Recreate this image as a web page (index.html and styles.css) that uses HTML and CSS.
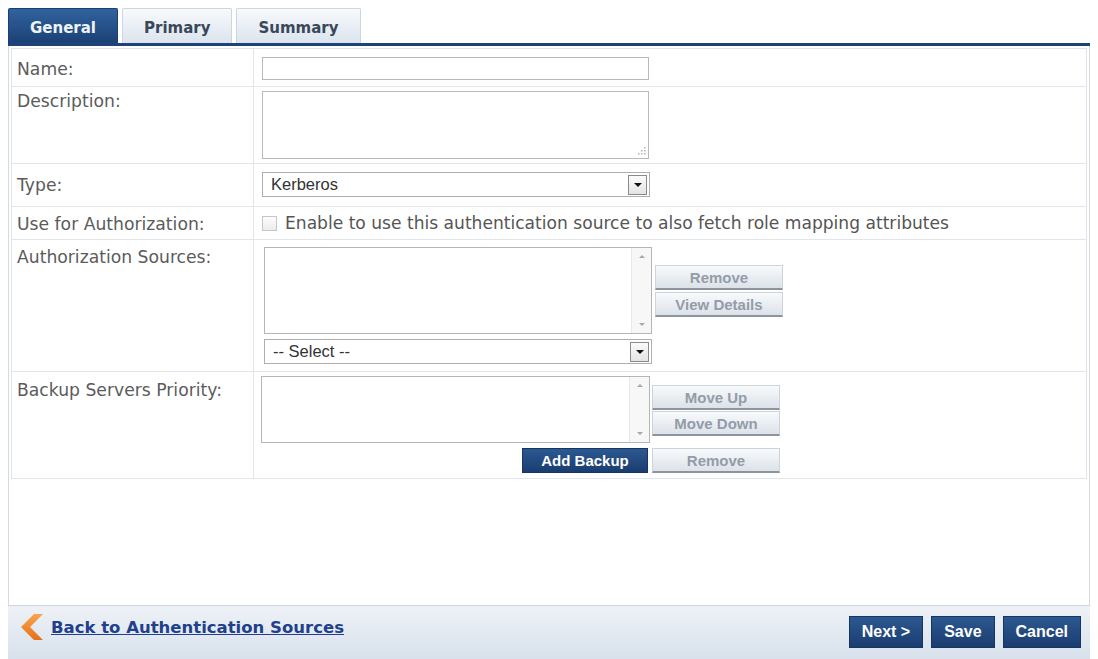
FILE: index.html
```html
<!DOCTYPE html>
<html>
<head>
<meta charset="utf-8">
<title>Authentication Source</title>
<link rel="stylesheet" href="styles.css">
</head>
<body>
<div class="tabs">
  <div class="tab active">General</div>
  <div class="tab">Primary</div>
  <div class="tab">Summary</div>
</div>
<div class="panel">
  <div class="form">
    <div class="label l-name">Name:</div>
    <div class="value v-name"><input class="text" type="text"></div>

    <div class="label l-desc">Description:</div>
    <div class="value v-desc">
      <div class="textarea">
        <svg class="grip" width="10" height="10" viewBox="0 0 10 10"><g fill="#b5b5b5"><rect x="8" y="1" width="1.5" height="1.5"/><rect x="5" y="4" width="1.5" height="1.5"/><rect x="8" y="4" width="1.5" height="1.5"/><rect x="2" y="7" width="1.5" height="1.5"/><rect x="5" y="7" width="1.5" height="1.5"/><rect x="8" y="7" width="1.5" height="1.5"/></g></svg>
      </div>
    </div>

    <div class="label l-type">Type:</div>
    <div class="value v-type">
      <div class="select"><span>Kerberos</span><span class="arrow"></span></div>
    </div>

    <div class="label l-use">Use for Authorization:</div>
    <div class="value v-use">
      <span class="cb"></span><span class="cbtext">Enable to use this authentication source to also fetch role mapping attributes</span>
    </div>

    <div class="label l-auth">Authorization Sources:</div>
    <div class="value v-auth">
      <div class="auth-grid">
        <div class="listbox lb-auth"><div class="sb"><span class="up"></span><span class="dn"></span></div></div>
        <div class="btncol auth-btns">
          <div class="gbtn">Remove</div>
          <div class="gbtn">View Details</div>
        </div>
        <div class="select"><span>-- Select --</span><span class="arrow"></span></div>
      </div>
    </div>

    <div class="label l-backup">Backup Servers Priority:</div>
    <div class="value v-backup">
      <div class="backup-grid">
        <div class="listbox lb-backup"><div class="sb"><span class="up"></span><span class="dn"></span></div></div>
        <div class="btncol move-btns">
          <div class="gbtn">Move Up</div>
          <div class="gbtn">Move Down</div>
        </div>
        <div class="bbtn add">Add Backup</div>
        <div class="gbtn">Remove</div>
      </div>
    </div>
  </div>
</div>
<div class="footer">
  <a class="back" href="#">
    <svg class="chev" width="27" height="28" viewBox="0 0 27 28">
      <defs><linearGradient id="og" x1="0" y1="0" x2="0" y2="1"><stop offset="0" stop-color="#f9a54a"/><stop offset="1" stop-color="#e5701a"/></linearGradient></defs>
      <polygon points="15,1 24,1 11,14 24,27 15,27 2,14" fill="url(#og)"/>
    </svg>
    <span class="backtext">Back to Authentication Sources</span>
  </a>
  <div class="actions">
    <div class="bbtn fbtn">Next &gt;</div>
    <div class="bbtn fbtn">Save</div>
    <div class="bbtn fbtn">Cancel</div>
  </div>
</div>
</body>
</html>
```
FILE: styles.css
```css
html, body {
  height: 100%;
  overflow: hidden;
}
body {
  margin: 8px 8px 0;
  height: 651px;
  display: flex;
  flex-direction: column;
  background: #fff;
  font-family: "DejaVu Sans", Verdana, sans-serif;
}

/* Tabs */
.tabs {
  display: flex;
  gap: 4px;
  height: 35px;
  border-bottom: 3px solid #1f4278;
  flex: none;
}
.tab {
  box-sizing: border-box;
  height: 35px;
  padding: 4px 21px 0;
  display: flex;
  align-items: center;
  font-weight: bold;
  font-size: 15px;
  color: #3a475a;
  background: linear-gradient(#f8fafc, #dbe4ee);
  border: 1px solid #cdd5de;
  border-bottom: none;
  border-radius: 2px 2px 0 0;
}
.tab.active {
  background: linear-gradient(#32629e, #1b4176);
  border-color: #1d3f70;
  color: #eef3f8;
}

/* Panel */
.panel {
  flex: 1;
  border-left: 1px solid #d3dae2;
  border-right: 1px solid #d3dae2;
  padding: 2px 2px 0;
}
.form {
  display: grid;
  grid-template-columns: 242px 1fr;
  border: 1px solid #dfe5ec;
  border-bottom: none;
}
.label {
  box-sizing: border-box;
  border-right: 1px solid #dfe5ec;
  border-bottom: 1px solid #e1e6ec;
  padding: 8px 5px 0;
  font-size: 17.2px;
  line-height: 20px;
  color: #5b5b5b;
}
.l-name { padding-top: 10px; }
.l-desc { padding-top: 4px; }
.l-type { padding-top: 11px; }
.l-use { padding-top: 7px; }
.l-auth { padding-top: 7px; }
.l-backup { padding-top: 8px; }

.value {
  border-bottom: 1px solid #e1e6ec;
  padding: 0 8px;
}
.v-name { padding-top: 8px; padding-bottom: 6px; }
.v-desc { padding-top: 4px; padding-bottom: 4px; }
.v-type { padding-top: 8px; padding-bottom: 9px; }
.v-use {
  padding-top: 8px;
  padding-bottom: 8px;
  display: flex;
  align-items: center;
}
.v-auth { padding-top: 7px; padding-bottom: 7px; padding-left: 10px; }
.v-backup { padding-top: 4px; padding-bottom: 5px; padding-left: 7px; }

/* Controls */
.text {
  display: block;
  box-sizing: border-box;
  width: 387px;
  height: 23px;
  margin: 0;
  border: 1px solid #b9b9b9;
  background: #fff;
  padding: 0 4px;
}
.textarea {
  box-sizing: border-box;
  width: 387px;
  height: 68px;
  border: 1px solid #b9b9b9;
  position: relative;
  background: #fff;
}
.grip {
  position: absolute;
  right: 2px;
  bottom: 2px;
}
.select {
  box-sizing: border-box;
  width: 388px;
  height: 25px;
  border: 1px solid #aeaeae;
  display: flex;
  align-items: center;
  justify-content: space-between;
  padding-left: 8px;
  font-family: "Liberation Sans", Arial, sans-serif;
  font-size: 16.5px;
  color: #333;
  background: #fff;
}
.arrow {
  box-sizing: border-box;
  width: 19px;
  height: 20px;
  margin-right: 2px;
  border: 1px solid #8a8a8a;
  background: linear-gradient(#fbfbfb, #e4e4e4);
  display: flex;
  align-items: center;
  justify-content: center;
}
.arrow::after {
  content: "";
  width: 0;
  height: 0;
  border-left: 4px solid transparent;
  border-right: 4px solid transparent;
  border-top: 4px solid #111;
}
.cb {
  box-sizing: border-box;
  width: 15px;
  height: 15px;
  border: 1px solid #c6c6c6;
  background: linear-gradient(#fdfdfd, #ececec);
  margin-right: 8px;
  flex: none;
}
.cbtext {
  font-size: 17.1px;
  line-height: 16px;
  color: #555;
  white-space: nowrap;
}

.listbox {
  box-sizing: border-box;
  border: 1px solid #b5b5b5;
  background: #fff;
  display: flex;
  justify-content: flex-end;
}
.lb-auth { height: 87px; }
.lb-backup { height: 67px; }
.sb {
  width: 19px;
  background: #f7f7f7;
  border-left: 1px solid #e8e8e8;
  display: flex;
  flex-direction: column;
  justify-content: space-between;
  align-items: center;
  padding: 7px 0;
}
.up, .dn {
  width: 0;
  height: 0;
  border-left: 3px solid transparent;
  border-right: 3px solid transparent;
}
.up { border-bottom: 3px solid #a8a8a8; }
.dn { border-top: 3px solid #a8a8a8; }

.auth-grid {
  display: grid;
  grid-template-columns: 388px 128px;
  column-gap: 3px;
  row-gap: 5px;
  align-items: start;
}
.backup-grid {
  display: grid;
  grid-template-columns: 389px 128px;
  column-gap: 2px;
  row-gap: 5px;
  align-items: start;
}
.btncol {
  display: flex;
  flex-direction: column;
}
.auth-btns { margin-top: 18px; gap: 2px; }
.move-btns { margin-top: 9px; gap: 1px; }

.gbtn {
  box-sizing: border-box;
  width: 128px;
  height: 25px;
  border: 1px solid #ccd3db;
  border-bottom: 2px solid #8d949c;
  background: linear-gradient(#f8fafc, #dce2e9);
  color: #939ca8;
  font-family: "Liberation Sans", Arial, sans-serif;
  font-weight: bold;
  font-size: 15px;
  display: flex;
  align-items: center;
  justify-content: center;
}
.bbtn {
  box-sizing: border-box;
  background: linear-gradient(#2c5891, #1a3d70);
  border: 1px solid #163660;
  color: #fff;
  font-family: "Liberation Sans", Arial, sans-serif;
  font-weight: bold;
  display: flex;
  align-items: center;
  justify-content: center;
}
.add {
  justify-self: end;
  margin-right: 2px;
  width: 126px;
  height: 25px;
  font-size: 15px;
}

/* Footer */
.footer {
  flex: none;
  height: 54px;
  box-sizing: border-box;
  border-top: 1px solid #cdd6e0;
  background: linear-gradient(#eef2f7, #d8e1ec);
  display: flex;
  justify-content: space-between;
  align-items: flex-start;
  padding: 7px 9px 0 11px;
}
.back {
  display: flex;
  align-items: center;
  gap: 5px;
  text-decoration: none;
}
.backtext {
  font-weight: bold;
  font-size: 16.5px;
  color: #213f8a;
  text-decoration: underline;
}
.actions {
  display: flex;
  gap: 8px;
  margin-top: 3px;
}
.fbtn {
  height: 32px;
  padding: 0 12px;
  font-size: 16px;
}
```
